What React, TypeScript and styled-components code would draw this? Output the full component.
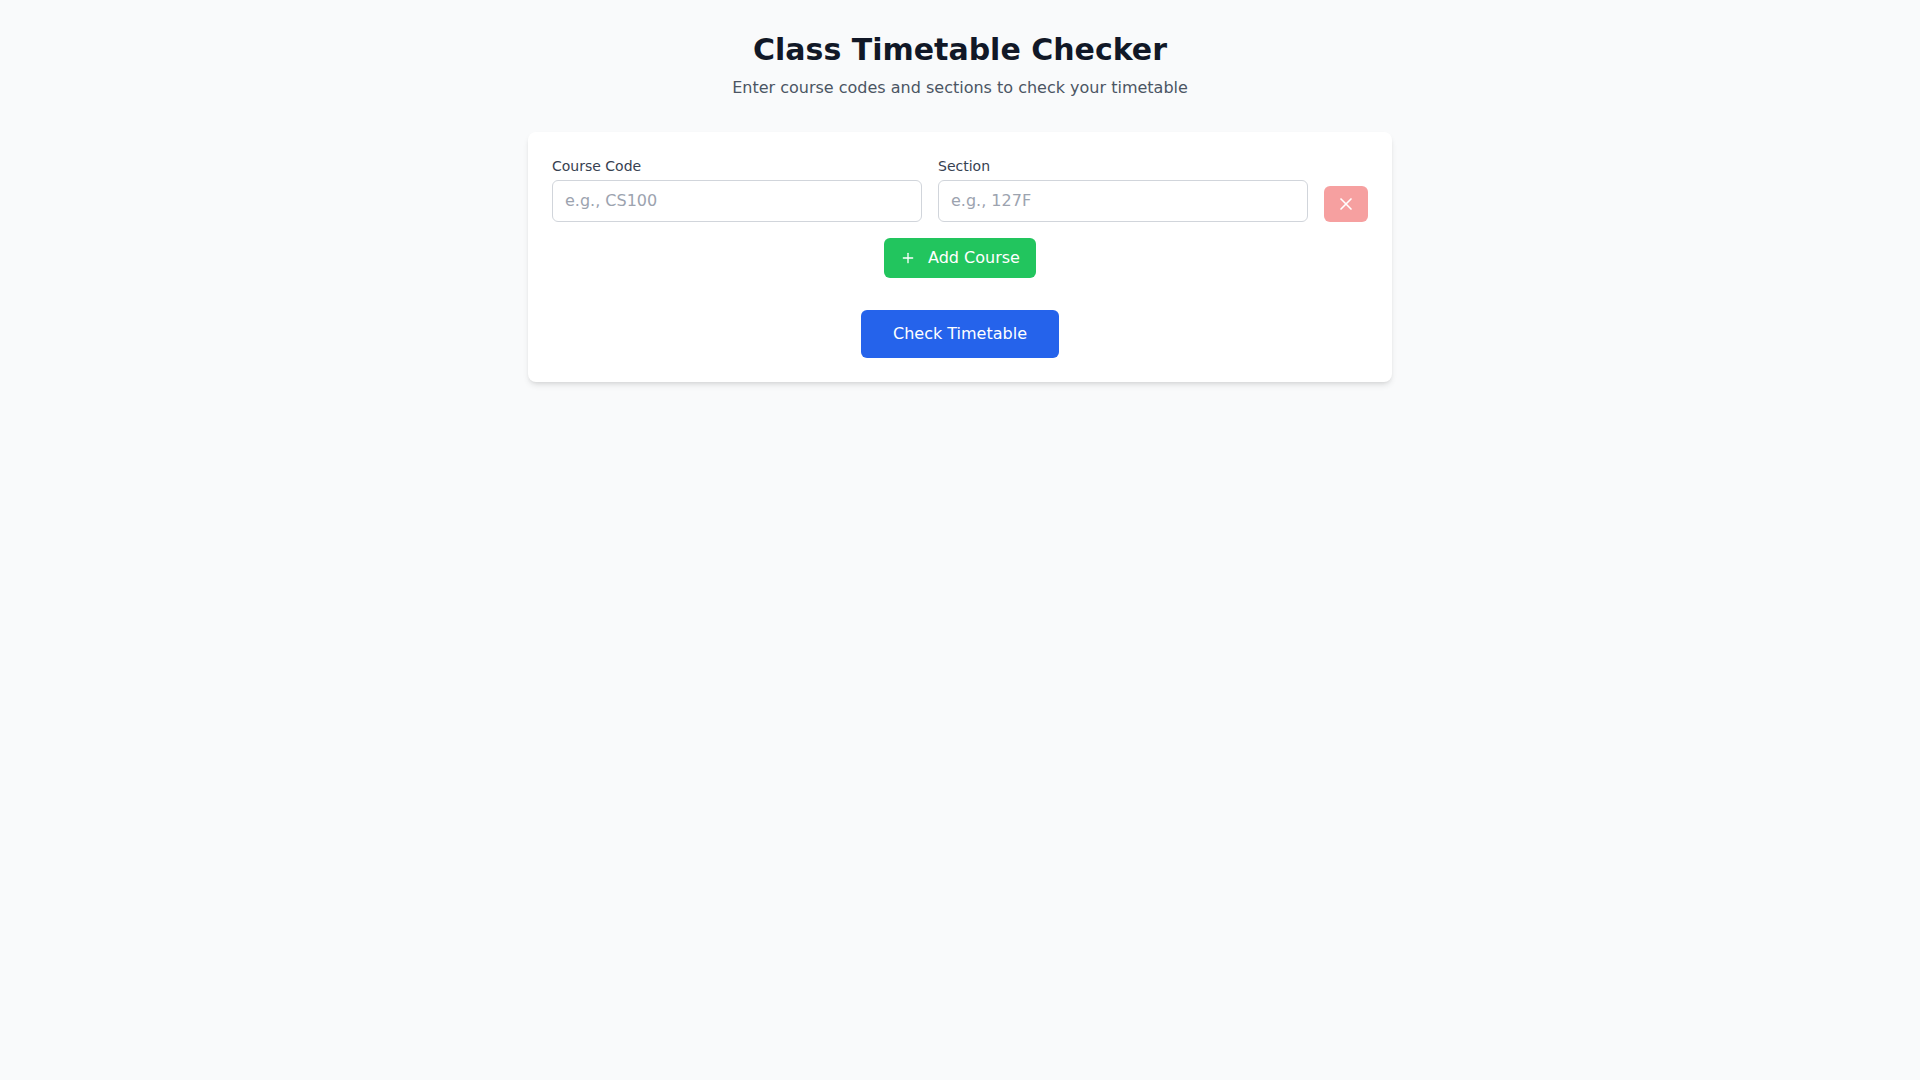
import React from "react";
import styled, { createGlobalStyle } from "styled-components";
import { Plus, X } from "lucide-react";

const GlobalStyle = createGlobalStyle`
  * { box-sizing: border-box; }
  body {
    margin: 0;
    background: #f9fafb;
    font-family: "DejaVu Sans", "Liberation Sans", sans-serif;
  }
`;

export const Page = styled.div`
  min-height: 100vh;
  background: #f9fafb;
  padding: 32px 16px;
`;

export const Container = styled.div`
  max-width: 896px;
  margin: 0 auto;
  padding: 0 16px;
`;

export const Header = styled.header`
  text-align: center;
  margin-bottom: 32px;
`;

export const Title = styled.h1`
  margin: 0 0 8px;
  font-size: 30px;
  line-height: 36px;
  font-weight: 700;
  color: #111827;
`;

export const Subtitle = styled.p`
  margin: 0;
  font-size: 16px;
  line-height: 24px;
  color: #4b5563;
`;

export const Card = styled.div`
  background: #fff;
  border-radius: 8px;
  box-shadow: 0 4px 6px -1px rgba(0, 0, 0, 0.1), 0 2px 4px -2px rgba(0, 0, 0, 0.1);
  padding: 24px;
  display: flex;
  flex-direction: column;
`;

export const CourseRow = styled.div`
  display: flex;
  align-items: flex-end;
  gap: 16px;
`;

export const Field = styled.div`
  flex: 1;
  display: flex;
  flex-direction: column;
`;

export const Label = styled.label`
  font-size: 14px;
  line-height: 20px;
  font-weight: 500;
  color: #374151;
  margin-bottom: 4px;
`;

export const Input = styled.input`
  width: 100%;
  padding: 8px 12px;
  font-family: inherit;
  font-size: 16px;
  line-height: 24px;
  border: 1px solid #d1d5db;
  border-radius: 6px;
  color: #111827;
  outline: none;
  &::placeholder {
    color: #9ca3af;
  }
`;

export const RemoveButton = styled.button`
  display: flex;
  align-items: center;
  justify-content: center;
  padding: 8px 12px;
  border: none;
  border-radius: 6px;
  background: #ef4444;
  color: #fff;
  opacity: 0.5;
  cursor: not-allowed;
`;

export const ButtonRow = styled.div<{ $top: number }>`
  display: flex;
  justify-content: center;
  margin-top: ${(p) => p.$top}px;
`;

export const AddButton = styled.button`
  display: flex;
  align-items: center;
  gap: 12px;
  padding: 8px 16px;
  border: none;
  border-radius: 6px;
  background: #22c55e;
  color: #fff;
  font-family: inherit;
  font-size: 16px;
  line-height: 24px;
  cursor: pointer;
`;

export const CheckButton = styled.button`
  padding: 12px 32px;
  border: none;
  border-radius: 6px;
  background: #2563eb;
  color: #fff;
  font-family: inherit;
  font-size: 16px;
  line-height: 24px;
  font-weight: 500;
  cursor: pointer;
`;

const App: React.FC = () => {
  return (
    <>
      <GlobalStyle />
      <Page>
        <Container>
          <Header>
            <Title>Class Timetable Checker</Title>
            <Subtitle>Enter course codes and sections to check your timetable</Subtitle>
          </Header>
          <Card>
            <CourseRow>
              <Field>
                <Label>Course Code</Label>
                <Input placeholder="e.g., CS100" />
              </Field>
              <Field>
                <Label>Section</Label>
                <Input placeholder="e.g., 127F" />
              </Field>
              <RemoveButton disabled>
                <X size={20} strokeWidth={2} />
              </RemoveButton>
            </CourseRow>
            <ButtonRow $top={16}>
              <AddButton>
                <Plus size={16} strokeWidth={2} />
                Add Course
              </AddButton>
            </ButtonRow>
            <ButtonRow $top={32}>
              <CheckButton>Check Timetable</CheckButton>
            </ButtonRow>
          </Card>
        </Container>
      </Page>
    </>
  );
};

export default App;
